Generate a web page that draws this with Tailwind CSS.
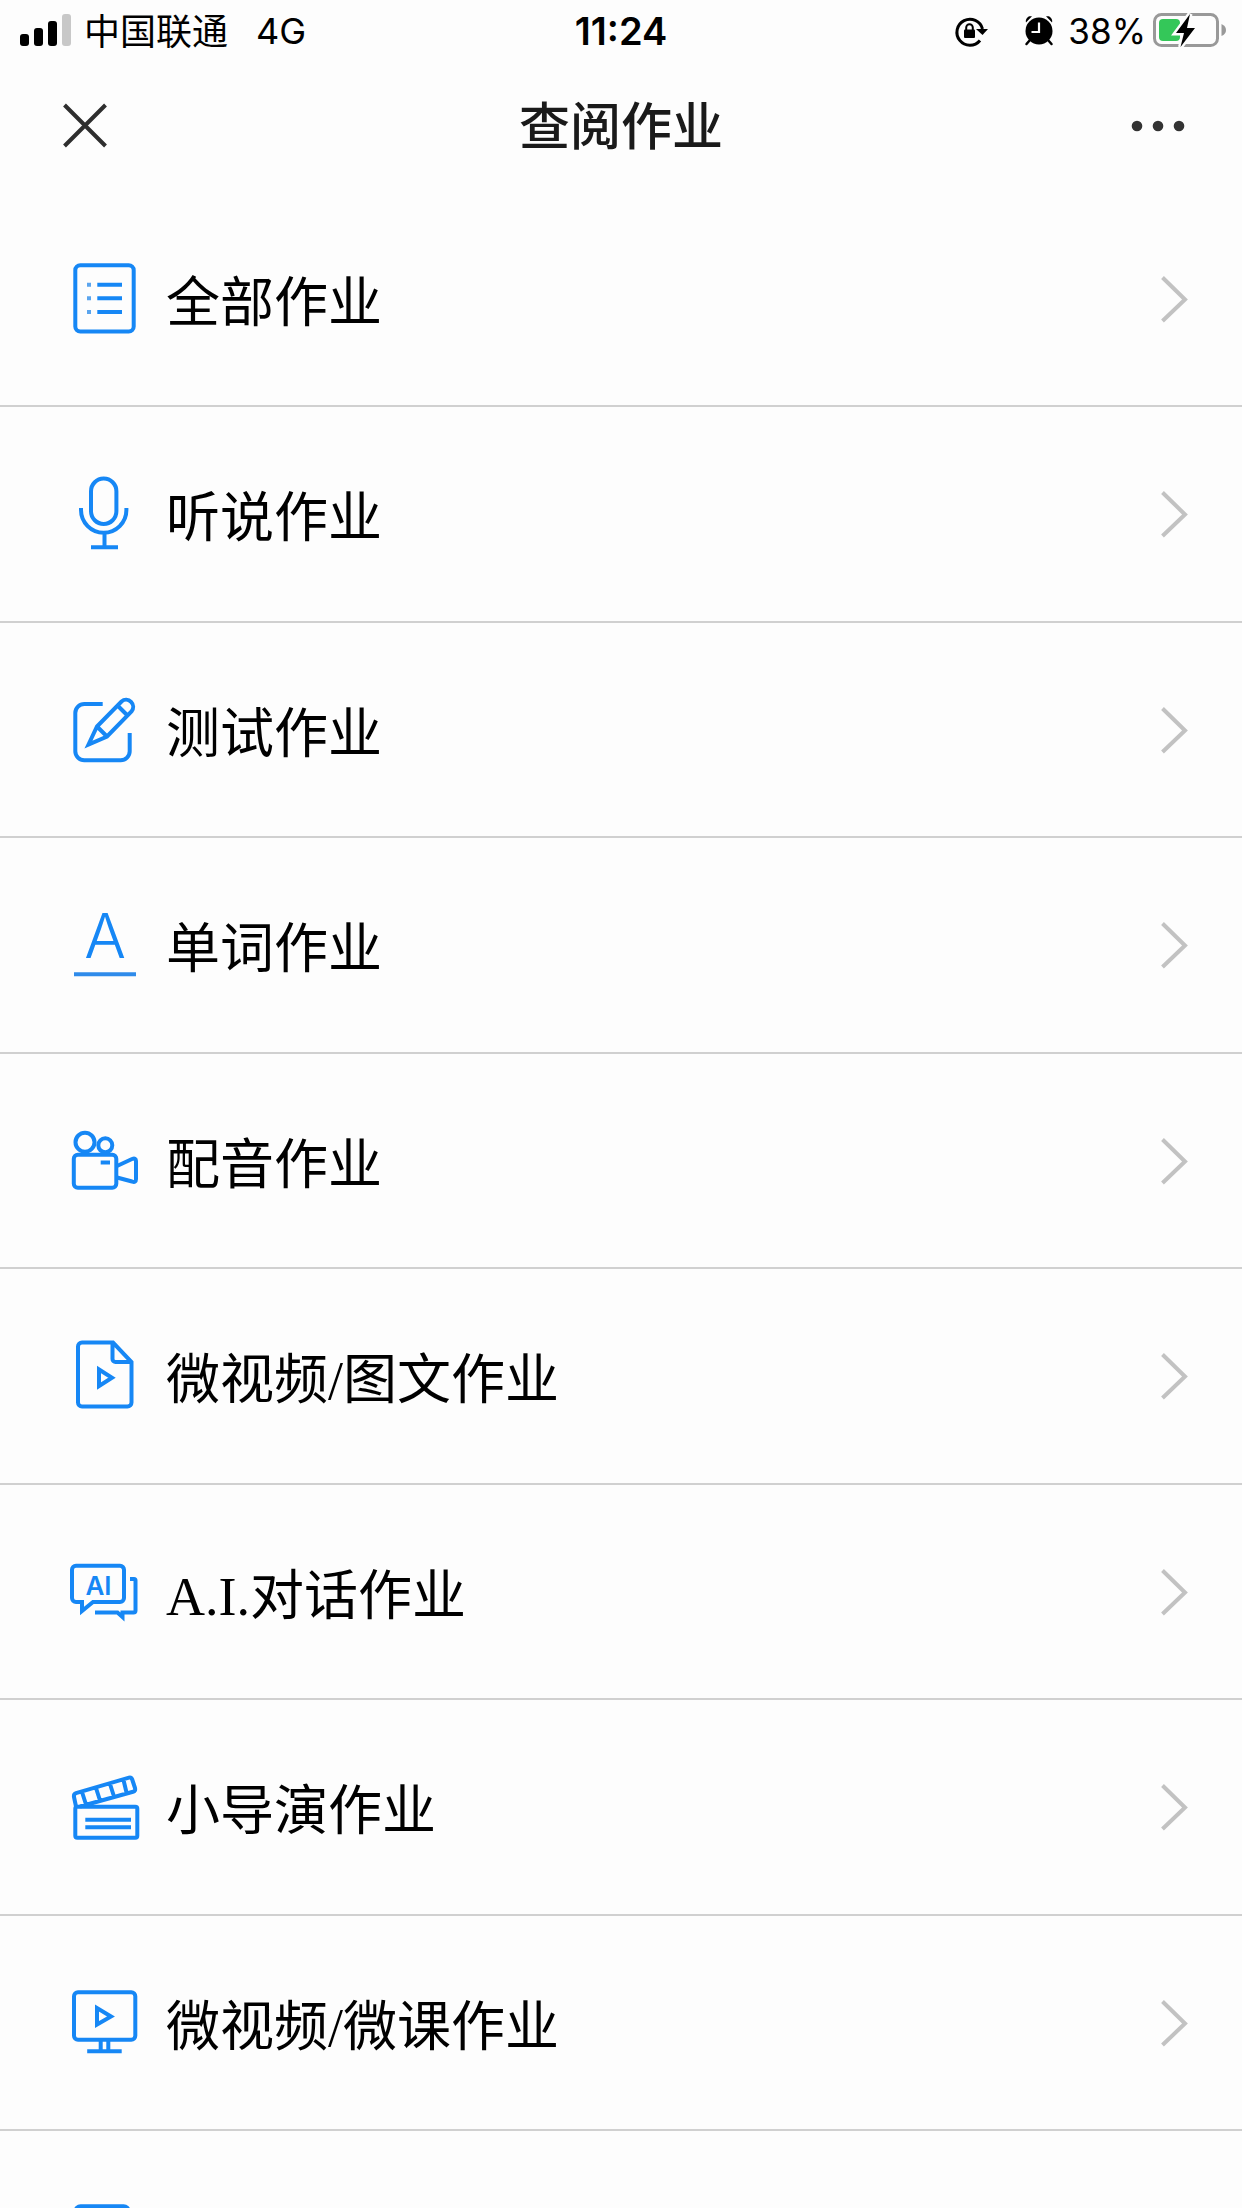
<!DOCTYPE html>
<html lang="zh-CN">
<head>
<meta charset="utf-8">
<meta name="viewport" content="width=device-width, initial-scale=1">
<title>查阅作业</title>
<script src="https://cdn.jsdelivr.net/npm/@tailwindcss/browser@4"></script>
</head>
<body class="flex h-screen flex-col overflow-hidden bg-[#fdfdfd] text-black">

<!-- Status bar -->
<div class="grid h-[62px] shrink-0 grid-cols-[1fr_auto_1fr] items-center px-4 font-['Inter','Noto_Sans_CJK_SC',sans-serif] text-[36px] leading-[62px]">
  <div class="flex items-center pl-1">
    <svg class="h-[62px] w-[52px]" viewBox="0 0 52 62" aria-hidden="true">
      <rect x="0" y="34" width="9" height="12" rx="3"/>
      <rect x="14" y="28" width="9" height="18" rx="3"/>
      <rect x="28" y="21" width="9" height="25" rx="3"/>
      <rect x="42" y="14" width="9" height="32" rx="3" fill="#c8c8c8"/>
    </svg>
    <span class="ml-3 pb-1 font-['Noto_Sans_CJK_SC',sans-serif] leading-[58px]">中国联通</span>
    <span class="ml-7">4G</span>
  </div>
  <span class="text-[38px] font-semibold">11:24</span>
  <div class="flex items-center justify-end">
    <svg class="h-[62px] w-[34px]" viewBox="0 0 34 62" aria-hidden="true">
      <path d="M26 40.500A13 13 0 1 1 28.500 29" fill="none" stroke="#000" stroke-width="3"/>
      <path d="M22 29h12l-5.500 6z"/>
      <rect x="10" y="29.500" width="11" height="8.500" rx="1"/>
      <path d="M12.200 30v-2.500a3.300 3.300 0 0 1 6.600 0v2.500" fill="none" stroke="#000" stroke-width="2"/>
    </svg>
    <svg class="ml-9 h-[62px] w-[30px]" viewBox="0 0 30 62" aria-hidden="true">
      <circle cx="15" cy="31" r="13.500"/>
      <path d="M2 22.500a5 5 0 0 1 6-6.200zM28 22.500a5 5 0 0 0-6-6.200z"/>
      <path d="M6 40l-3.500 4M24 40l3.500 4" stroke="#000" stroke-width="2.500" stroke-linecap="round"/>
      <path d="M15 22.500v9.500H7.500" fill="none" stroke="#fdfdfd" stroke-width="2.200"/>
    </svg>
    <span class="ml-[14px] text-[35px]">38%</span>
    <svg class="ml-[6px] h-[62px] w-[74px]" viewBox="0 0 74 62" aria-hidden="true">
      <rect x="2.500" y="14.500" width="63" height="31" rx="7" fill="none" stroke="#999" stroke-width="3"/>
      <path d="M69.500 24q4.500 2 4.500 6t-4.500 6z" fill="#999"/>
      <rect x="7" y="19" width="21" height="22" rx="4" fill="#34c759"/>
      <path d="M38 14L24 33h8l-3.500 14L43 28h-8z" fill="#000" stroke="#fdfdfd" stroke-width="5" paint-order="stroke"/>
    </svg>
  </div>
</div>

<!-- Title bar -->
<header class="grid h-[130px] shrink-0 grid-cols-[1fr_auto_1fr] items-center px-14 font-['Noto_Sans_CJK_SC',sans-serif]">
  <button type="button" aria-label="关闭" class="justify-self-start">
    <svg class="block h-[58px] w-[58px]" viewBox="0 0 58 58" fill="none" stroke="#2e2e2e" stroke-width="4"><path d="M8.500 7l41 41M49.500 7l-41 41"/></svg>
  </button>
  <h1 class="pb-2 text-[51px] font-medium leading-[58px] text-[#1a1a1a]">查阅作业</h1>
  <button type="button" aria-label="更多" class="justify-self-end">
    <svg class="block h-[58px] w-[58px]" viewBox="0 0 58 58" fill="#333"><circle cx="9" cy="28" r="5.300"/><circle cx="30" cy="28" r="5.300"/><circle cx="51" cy="28" r="5.300"/></svg>
  </button>
</header>

<!-- Homework categories -->
<main class="min-h-0 flex-1 overflow-hidden font-['Liberation_Serif','Noto_Sans_CJK_SC',serif] text-[54px] leading-[70px]">
  <ul class="[&>li]:border-b-2 [&>li]:border-[#d0d0d0] [&>li]:pt-[67px] [&>li]:pb-[66px] [&>li:nth-child(even)]:pb-[67px] [&_a]:flex [&_a]:items-center [&_a]:pl-[68px] [&_a]:pr-[54px] [&_span]:ml-[26px] [&_span]:flex-1 [&_span]:pt-[10px]">
    <li><a href="#all">
      <svg class="h-20 w-[72px]" viewBox="0 0 72 80" fill="none" stroke="#1687f5" stroke-width="4" aria-hidden="true"><rect x="7.300" y="6.300" width="58.400" height="66.300" rx="5"/><path d="M29.300 25.700H54M29.300 39.300H54M29.300 53H54"/><path d="M19 25.700h4M19 39.300h4M19 53h4" stroke="#5ba5ee"/></svg>
      <span>全部作业</span>
      <svg class="h-20 w-7" viewBox="0 0 28 80" fill="none" stroke="#c2c2c2" stroke-width="4" aria-hidden="true"><path d="M2.500 18.500L25 40.500L2.500 62"/></svg>
    </a></li>
    <li><a href="#speaking">
      <svg class="h-20 w-[72px]" viewBox="0 0 72 80" fill="none" stroke="#1687f5" stroke-width="4" aria-hidden="true"><rect x="23" y="4.500" width="25.400" height="45.500" rx="12.700"/><path d="M13 34v2a22.700 22.700 0 0 0 45.400 0v-2M36.500 58.500V73M23 73.300h27"/></svg>
      <span>听说作业</span>
      <svg class="h-20 w-7" viewBox="0 0 28 80" fill="none" stroke="#c2c2c2" stroke-width="4" aria-hidden="true"><path d="M2.500 18.500L25 40.500L2.500 62"/></svg>
    </a></li>
    <li><a href="#test">
      <svg class="h-20 w-[72px]" viewBox="0 0 72 80" fill="none" stroke="#1687f5" stroke-width="4" aria-hidden="true"><path d="M34.700 14H16.300a9 9 0 0 0-9 9v38.300a9 9 0 0 0 9 9h36.400a9 9 0 0 0 9-9V43"/><path d="M20.500 54.500l8.500-18L53.500 11.500a7.100 7.100 0 0 1 10 10L39 46.500zM29 36.500l10 10M49.500 15.500l10 10"/></svg>
      <span>测试作业</span>
      <svg class="h-20 w-7" viewBox="0 0 28 80" fill="none" stroke="#c2c2c2" stroke-width="4" aria-hidden="true"><path d="M2.500 18.500L25 40.500L2.500 62"/></svg>
    </a></li>
    <li><a href="#words">
      <svg class="h-20 w-[72px] overflow-visible" viewBox="0 0 72 80" aria-hidden="true"><text x="37" y="52.500" text-anchor="middle" fill="#1687f5" class="font-['Inter',sans-serif] text-[62px] font-light">A</text><path d="M6 69.300h62" stroke="#2f8bea" stroke-width="4"/></svg>
      <span>单词作业</span>
      <svg class="h-20 w-7" viewBox="0 0 28 80" fill="none" stroke="#c2c2c2" stroke-width="4" aria-hidden="true"><path d="M2.500 18.500L25 40.500L2.500 62"/></svg>
    </a></li>
    <li><a href="#dubbing">
      <svg class="h-20 w-[72px]" viewBox="0 0 72 80" fill="none" stroke="#1687f5" stroke-width="4" aria-hidden="true"><circle cx="17" cy="21.200" r="9.500"/><circle cx="37.300" cy="24.300" r="7"/><rect x="5.800" y="33.700" width="42.500" height="33" rx="4"/><path d="M32.700 41.500H42"/><path d="M49 45l15-7q4-1.500 4 2v18q0 4-4 2.500l-15-4"/></svg>
      <span>配音作业</span>
      <svg class="h-20 w-7" viewBox="0 0 28 80" fill="none" stroke="#c2c2c2" stroke-width="4" aria-hidden="true"><path d="M2.500 18.500L25 40.500L2.500 62"/></svg>
    </a></li>
    <li><a href="#video-text">
      <svg class="h-20 w-[72px]" viewBox="0 0 72 80" fill="none" stroke="#1687f5" stroke-width="4" aria-hidden="true"><path d="M45 6.600H14a4 4 0 0 0-4 4v56a4 4 0 0 0 4 4h45.500a4 4 0 0 0 4-4V26zM44.500 7v16a3 3 0 0 0 3 3h16"/><path d="M31 33.500v16.500l13-8.200z"/></svg>
      <span>微视频/图文作业</span>
      <svg class="h-20 w-7" viewBox="0 0 28 80" fill="none" stroke="#c2c2c2" stroke-width="4" aria-hidden="true"><path d="M2.500 18.500L25 40.500L2.500 62"/></svg>
    </a></li>
    <li><a href="#ai-dialogue">
      <svg class="h-20 w-[72px]" viewBox="0 0 72 80" fill="none" stroke="#1687f5" stroke-width="4" aria-hidden="true"><path d="M8 13.800h44a4 4 0 0 1 4 4V46a4 4 0 0 1-4 4H25L14 59V50H8a4 4 0 0 1-4-4V17.800a4 4 0 0 1 4-4z"/><path d="M62 27h4a1.500 1.500 0 0 1 1.500 1.500v30a2 2 0 0 1-2 2H54.500V65l-5-4.500H27"/><text x="30.500" y="43" text-anchor="middle" fill="#1687f5" stroke="none" class="font-['Inter',sans-serif] text-[26px] font-semibold">AI</text></svg>
      <span>A.I.对话作业</span>
      <svg class="h-20 w-7" viewBox="0 0 28 80" fill="none" stroke="#c2c2c2" stroke-width="4" aria-hidden="true"><path d="M2.500 18.500L25 40.500L2.500 62"/></svg>
    </a></li>
    <li><a href="#director">
      <svg class="h-20 w-[72px]" viewBox="0 0 72 80" fill="none" stroke="#1687f5" stroke-width="4" stroke-linejoin="round" aria-hidden="true"><rect x="7.300" y="39.700" width="62" height="31" rx="2"/><path d="M17.300 52.700H63M17.300 60.300H63"/><path d="M8 39.500L6 30q-.5-3 2-3.800L61 10.700q2.500-.7 3.200 1.800l2.800 8.500q.8 3-2 3.700L12 39.500M14 25l4 12.500M28 21l4 12.500M42 17l4 12.500M55.500 13l3 12.500"/></svg>
      <span>小导演作业</span>
      <svg class="h-20 w-7" viewBox="0 0 28 80" fill="none" stroke="#c2c2c2" stroke-width="4" aria-hidden="true"><path d="M2.500 18.500L25 40.500L2.500 62"/></svg>
    </a></li>
    <li><a href="#video-lesson">
      <svg class="h-20 w-[72px]" viewBox="0 0 72 80" fill="none" stroke="#1687f5" stroke-width="4" aria-hidden="true"><rect x="6" y="9.300" width="61.300" height="47.500" rx="4"/><path d="M29 25v16.500L43 33.500z"/><path d="M32.700 57v11M40.300 57v11M19.200 68.300h34.500"/></svg>
      <span>微视频/微课作业</span>
      <svg class="h-20 w-7" viewBox="0 0 28 80" fill="none" stroke="#c2c2c2" stroke-width="4" aria-hidden="true"><path d="M2.500 18.500L25 40.500L2.500 62"/></svg>
    </a></li>
    <li><a href="#more" aria-label="更多作业">
      <svg class="h-20 w-[72px]" viewBox="0 0 72 80" fill="none" stroke="#1687f5" stroke-width="4" aria-hidden="true"><rect x="7.600" y="8.300" width="53" height="62" rx="5"/></svg>
    </a></li>
  </ul>
</main>
</body>
</html>
